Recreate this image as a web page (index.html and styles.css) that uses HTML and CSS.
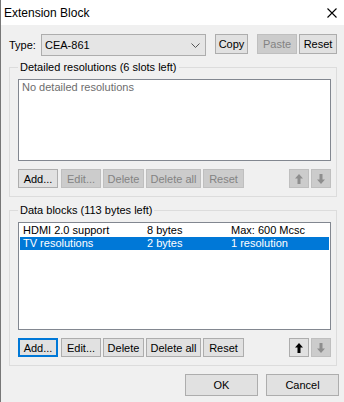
FILE: index.html
```html
<!DOCTYPE html>
<html lang="en">
<head>
    <meta charset="UTF-8">
    <title>Extension Block</title>
    <link rel="stylesheet" href="styles.css">
</head>
<body>
    <div class="window">
        <!-- 제목 표시줄 -->
        <div class="titlebar">
            <span class="title">Extension Block</span>
            <svg class="close" width="10" height="10" viewBox="0 0 10 10">
                <path d="M0.5 0.5 L9.5 9.5 M9.5 0.5 L0.5 9.5" stroke="#000" stroke-width="1.1" fill="none"/>
            </svg>
        </div>

        <div class="content">
            <!-- 타입 선택 줄 -->
            <div class="type-row">
                <span class="type-label">Type:</span>
                <div class="combo">
                    <span>CEA-861</span>
                    <svg width="9" height="5" viewBox="0 0 9 5">
                        <path d="M0.5 0.5 L4.5 4.5 L8.5 0.5" stroke="#555" fill="none"/>
                    </svg>
                </div>
                <button class="btn btn-copy">Copy</button>
                <button class="btn btn-paste" disabled>Paste</button>
                <button class="btn btn-reset-top">Reset</button>
            </div>

            <!-- Detailed resolutions -->
            <fieldset class="group">
                <legend>Detailed resolutions (6 slots left)</legend>
                <div class="list list-detailed">
                    <div class="empty">No detailed resolutions</div>
                </div>
                <div class="btn-row">
                    <button class="btn w-add">Add...</button>
                    <button class="btn w-edit" disabled>Edit...</button>
                    <button class="btn w-delete" disabled>Delete</button>
                    <button class="btn w-delall" disabled>Delete all</button>
                    <button class="btn w-reset" disabled>Reset</button>
                    <span class="spacer"></span>
                    <button class="btn arrow" disabled>
                        <svg width="8" height="10" viewBox="0 0 8 10"><path d="M4 0 L8 4.5 H5.5 V10 H2.5 V4.5 H0 Z" fill="#8e8e8e"/></svg>
                    </button>
                    <button class="btn arrow" disabled>
                        <svg width="8" height="10" viewBox="0 0 8 10"><path d="M4 10 L8 5.5 H5.5 V0 H2.5 V5.5 H0 Z" fill="#8e8e8e"/></svg>
                    </button>
                </div>
            </fieldset>

            <!-- Data blocks -->
            <fieldset class="group group-data">
                <legend>Data blocks (113 bytes left)</legend>
                <div class="list list-data">
                    <div class="row">
                        <span>HDMI 2.0 support</span>
                        <span>8 bytes</span>
                        <span>Max: 600 Mcsc</span>
                    </div>
                    <div class="row selected">
                        <span>TV resolutions</span>
                        <span>2 bytes</span>
                        <span>1 resolution</span>
                    </div>
                </div>
                <div class="btn-row">
                    <button class="btn w-add focused">Add...</button>
                    <button class="btn w-edit">Edit...</button>
                    <button class="btn w-delete">Delete</button>
                    <button class="btn w-delall">Delete all</button>
                    <button class="btn w-reset">Reset</button>
                    <span class="spacer"></span>
                    <button class="btn arrow">
                        <svg width="8" height="10" viewBox="0 0 8 10"><path d="M4 0 L8 4.5 H5.5 V10 H2.5 V4.5 H0 Z" fill="#000"/></svg>
                    </button>
                    <button class="btn arrow" disabled>
                        <svg width="8" height="10" viewBox="0 0 8 10"><path d="M4 10 L8 5.5 H5.5 V0 H2.5 V5.5 H0 Z" fill="#8e8e8e"/></svg>
                    </button>
                </div>
            </fieldset>

            <!-- 하단 버튼 -->
            <div class="footer">
                <button class="btn btn-dialog">OK</button>
                <button class="btn btn-dialog">Cancel</button>
            </div>
        </div>
    </div>
</body>
</html>
```

FILE: styles.css
```css
body {
    margin: 0;
    font-family: "Liberation Sans", Arial, sans-serif;
    font-size: 11px;
    color: #000;
    background-color: #f0f0f0;
}

.window {
    width: 343px;
    height: 402px;
    border-left: 1px solid #777777;
    background-color: #f0f0f0;
    overflow: hidden;
}

/* 제목 표시줄 */
.titlebar {
    height: 25px;
    background-color: #ffffff;
    display: flex;
    align-items: center;
    padding: 0 7px 0 3px;
}

.title {
    flex: 1;
    font-size: 12px;
}

.close {
    display: block;
}

.content {
    padding: 9px 7px 0 8px;
}

/* 버튼 공통 */
.btn {
    font-family: inherit;
    font-size: 11px;
    color: #000;
    background-color: #e1e1e1;
    border: 1px solid #adadad;
    border-radius: 0;
    padding: 0;
    margin: 0;
    height: 19px;
    display: flex;
    align-items: center;
    justify-content: center;
}

.btn:disabled {
    background-color: #cccccc;
    border-color: #bfbfbf;
    color: #838383;
}

.btn.focused {
    border-color: #0078d7;
    box-shadow: inset 0 0 0 1px #0078d7;
}

/* 타입 줄 */
.type-row {
    display: flex;
    align-items: flex-start;
    height: 22px;
}

.type-label {
    width: 32px;
    line-height: 22px;
}

.combo {
    width: 165px;
    height: 22px;
    box-sizing: border-box;
    border: 1px solid #adadad;
    background-color: #e5e5e5;
    display: flex;
    align-items: center;
    justify-content: space-between;
    padding: 0 5px 0 3px;
}

.type-row .btn {
    height: 20px;
}

.btn-copy {
    width: 33px;
    margin-left: 9px !important;
}

.btn-paste {
    width: 40px;
    margin-left: 9px !important;
}

.btn-reset-top {
    width: 38px;
    margin-left: 2px !important;
}

/* 그룹 박스 */
.group {
    margin: 4px 0 0 0;
    border: 1px solid #dcdcdc;
    padding: 5px 5px 8px 8px;
    min-width: 0;
}

.group legend {
    padding: 0 2px;
    line-height: 14px;
}

.group-data {
    margin-top: 6px;
}

.list {
    background-color: #ffffff;
    border: 1px solid #828790;
    padding: 1px;
}

.list-detailed {
    height: 78px;
}

.list-data {
    height: 104px;
}

.empty {
    color: #6d6d6d;
    line-height: 13px;
    padding-left: 2px;
}

.row {
    display: grid;
    grid-template-columns: 124px 84px 1fr;
    line-height: 13px;
    padding-left: 3px;
    white-space: nowrap;
}

.row.selected {
    background-color: #0078d7;
    color: #ffffff;
}

.btn-row {
    display: flex;
    gap: 2px;
    margin-top: 8px;
}

.spacer {
    flex: 1;
}

.w-add { width: 40px; }
.w-edit { width: 40px; margin-left: 1px !important; }
.w-delete { width: 41px; }
.w-delall { width: 55px; }
.w-reset { width: 41px; }

.arrow {
    width: 20px;
}

.arrow svg {
    display: block;
}

/* 하단 OK / Cancel */
.footer {
    display: flex;
    justify-content: flex-end;
    gap: 8px;
    margin-top: 8px;
    margin-right: -2px;
}

.btn-dialog {
    width: 73px;
    height: 22px;
}
```
